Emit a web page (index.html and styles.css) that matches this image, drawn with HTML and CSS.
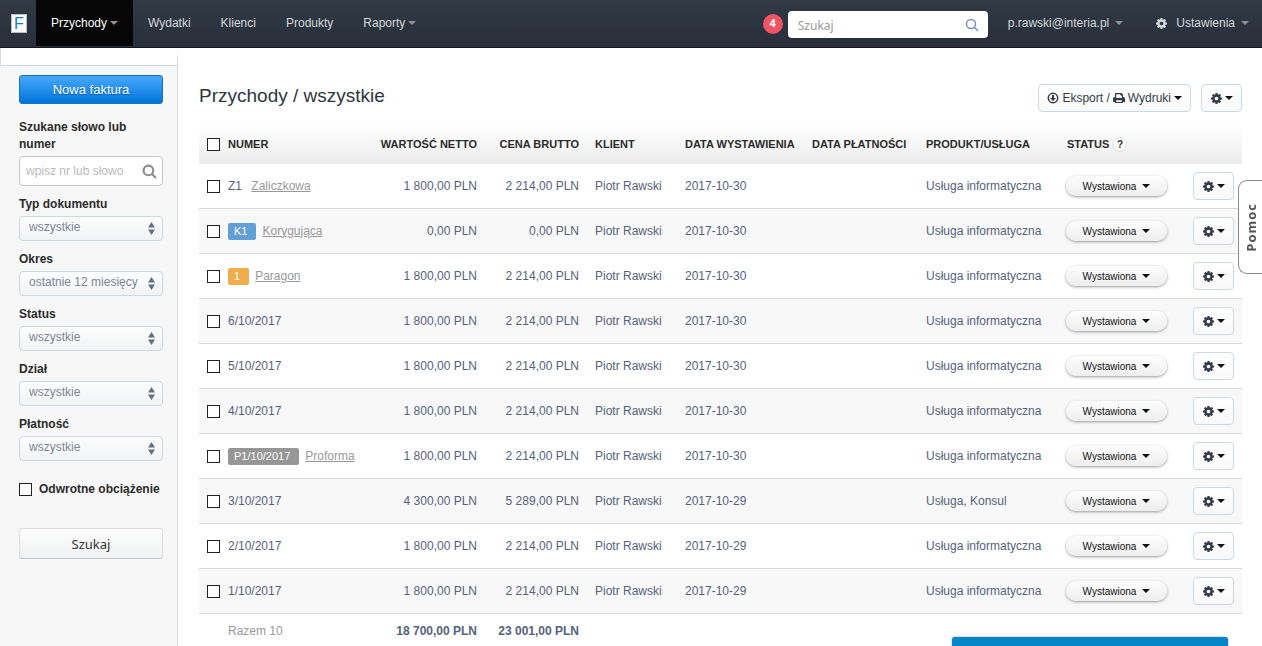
FILE: index.html
```html
<!DOCTYPE html>
<html lang="pl">
<head>
    <meta charset="UTF-8">
    <meta name="viewport" content="width=device-width, initial-scale=1.0">
    <title>Przychody / wszystkie</title>
    <link rel="stylesheet" href="styles.css">
</head>
<body>
    <svg class="symbols" aria-hidden="true">
        <symbol id="gear" viewBox="0 0 1536 1536">
            <path fill-rule="evenodd" d="M1024 768q0-106-75-181t-181-75-181 75-75 181 75 181 181 75 181-75 75-181zm512-109v222q0 12-8 23t-20 13l-185 28q-19 54-39 91 35 50 107 138 10 12 10 25t-9 23q-27 37-99 108t-94 71q-12 0-26-9l-138-108q-44 23-91 38-16 136-29 186-7 28-36 28h-222q-14 0-24.500-8.500t-11.500-21.500l-28-184q-49-16-90-37l-141 107q-10 9-25 9-14 0-25-11-126-114-165-168-7-10-7-23 0-12 8-23 15-21 51-66.500t54-70.500q-27-50-41-99l-183-27q-13-2-21-12.500t-8-23.500v-222q0-12 8-23t19-13l186-28q14-46 39-92-40-57-107-138-10-12-10-24 0-10 9-23 26-36 98.500-107.500t94.500-71.500q13 0 26 10l138 107q44-23 91-38 16-136 29-186 7-28 36-28h222q14 0 24.500 8.500t11.500 21.500l28 184q49 16 90 37l142-107q9-9 24-9 13 0 25 10 129 119 165 170 7 8 7 22 0 12-8 23-15 21-51 66.500t-54 70.500q26 50 41 98l183 28q13 2 21 12.500t8 23.500z"/>
        </symbol>
        <symbol id="caret" viewBox="0 0 8 4"><path d="M0 0h8L4 4z"/></symbol>
        <symbol id="lens" viewBox="0 0 14 14">
            <circle cx="6" cy="6" r="4.500" fill="none" stroke="currentColor"/>
            <path d="M9.300 9.300L13 13" fill="none" stroke="currentColor"/>
        </symbol>
        <symbol id="updown" viewBox="0 0 7 13"><path d="M3.500 0L7 5.500H0zM3.500 13L0 7.500h7z"/></symbol>
        <symbol id="download" viewBox="0 0 12 12">
            <circle cx="6" cy="6" r="4.700" fill="none" stroke="currentColor" stroke-width="1.500"/>
            <path d="M5 3h2v3h2L6 9 3 6h2z"/>
        </symbol>
        <symbol id="print" viewBox="0 0 12 12">
            <path fill-rule="evenodd" d="M2 1h6.500L10 2.500V5h.500Q12 5 12 6.500V10h-2v1H2v-1H0V6.500Q0 5 1.500 5H2zM3.200 2.200V6h5.600V3.600H7.400V2.200zM3.200 8.200v1.700h5.600V8.200z"/>
        </symbol>
    </svg>

    <header class="topbar">
        <a href="#" class="logo">F</a>
        <nav class="nav">
            <a href="#" class="active">Przychody <svg class="caret"><use href="#caret"/></svg></a>
            <a href="#">Wydatki</a>
            <a href="#">Klienci</a>
            <a href="#">Produkty</a>
            <a href="#">Raporty <svg class="caret"><use href="#caret"/></svg></a>
        </nav>
        <span class="badge">4</span>
        <form class="top-search">
            <input type="text" placeholder="Szukaj" aria-label="Szukaj">
            <svg class="lens"><use href="#lens"/></svg>
        </form>
        <div class="nav user-nav">
            <a href="#">p.rawski@interia.pl <svg class="caret"><use href="#caret"/></svg></a>
            <a href="#"><svg class="gear"><use href="#gear"/></svg>Ustawienia <svg class="caret"><use href="#caret"/></svg></a>
        </div>
    </header>

    <div class="page">
        <aside class="sidebar">
            <div class="sidebar-top"></div>
            <form class="filters">
                <button type="button" class="btn-new">Nowa faktura</button>
                <label for="slowo">Szukane słowo lub numer</label>
                <div class="field word">
                    <input type="text" id="slowo" placeholder="wpisz nr lub słowo">
                    <svg class="lens"><use href="#lens"/></svg>
                </div>
                <label for="typ">Typ dokumentu</label>
                <div class="field">
                    <select id="typ"><option>wszystkie</option></select>
                    <svg class="updown"><use href="#updown"/></svg>
                </div>
                <label for="okres">Okres</label>
                <div class="field">
                    <select id="okres"><option>ostatnie 12 miesięcy</option></select>
                    <svg class="updown"><use href="#updown"/></svg>
                </div>
                <label for="status">Status</label>
                <div class="field">
                    <select id="status"><option>wszystkie</option></select>
                    <svg class="updown"><use href="#updown"/></svg>
                </div>
                <label for="dzial">Dział</label>
                <div class="field">
                    <select id="dzial"><option>wszystkie</option></select>
                    <svg class="updown"><use href="#updown"/></svg>
                </div>
                <label for="platnosc">Płatność</label>
                <div class="field">
                    <select id="platnosc"><option>wszystkie</option></select>
                    <svg class="updown"><use href="#updown"/></svg>
                </div>
                <label class="check-row"><input type="checkbox"> Odwrotne obciążenie</label>
                <button type="button" class="btn-search">Szukaj</button>
            </form>
        </aside>

        <main class="main">
            <div class="title-row">
                <h1>Przychody / wszystkie</h1>
                <button class="btn export"><svg class="icon"><use href="#download"/></svg><span>Eksport /</span><svg class="icon"><use href="#print"/></svg><span>Wydruki</span><svg class="caret"><use href="#caret"/></svg></button>
                <button class="btn" aria-label="Opcje"><svg class="gear"><use href="#gear"/></svg><svg class="caret"><use href="#caret"/></svg></button>
            </div>

            <table class="invoices">
                <colgroup>
                    <col class="c-check"><col><col class="c-net"><col class="c-gross"><col class="c-client">
                    <col class="c-issued"><col class="c-paid"><col class="c-product"><col class="c-status"><col class="c-menu">
                </colgroup>
                <thead>
                    <tr>
                        <th><input type="checkbox" aria-label="Zaznacz wszystkie"></th>
                        <th>NUMER</th>
                        <th class="num">WARTOŚĆ NETTO</th>
                        <th class="num">CENA BRUTTO</th>
                        <th>KLIENT</th>
                        <th>DATA WYSTAWIENIA</th>
                        <th>DATA PŁATNOŚCI</th>
                        <th>PRODUKT/USŁUGA</th>
                        <th>STATUS <span class="help">?</span></th>
                        <th></th>
                    </tr>
                </thead>
                <tbody>
                    <tr>
                        <td><input type="checkbox" aria-label="Z1"></td>
                        <td>Z1 <a href="#" class="kind">Zaliczkowa</a></td>
                        <td class="num">1 800,00 PLN</td>
                        <td class="num">2 214,00 PLN</td>
                        <td>Piotr Rawski</td>
                        <td>2017-10-30</td>
                        <td></td>
                        <td>Usługa informatyczna</td>
                        <td class="st"><button class="status">Wystawiona <svg class="caret"><use href="#caret"/></svg></button></td>
                        <td><button class="btn" aria-label="Opcje"><svg class="gear"><use href="#gear"/></svg><svg class="caret"><use href="#caret"/></svg></button></td>
                    </tr>
                    <tr>
                        <td><input type="checkbox" aria-label="K1"></td>
                        <td><span class="tag blue">K1</span><a href="#" class="kind">Korygująca</a></td>
                        <td class="num">0,00 PLN</td>
                        <td class="num">0,00 PLN</td>
                        <td>Piotr Rawski</td>
                        <td>2017-10-30</td>
                        <td></td>
                        <td>Usługa informatyczna</td>
                        <td class="st"><button class="status">Wystawiona <svg class="caret"><use href="#caret"/></svg></button></td>
                        <td><button class="btn" aria-label="Opcje"><svg class="gear"><use href="#gear"/></svg><svg class="caret"><use href="#caret"/></svg></button></td>
                    </tr>
                    <tr>
                        <td><input type="checkbox" aria-label="1"></td>
                        <td><span class="tag orange">1</span><a href="#" class="kind">Paragon</a></td>
                        <td class="num">1 800,00 PLN</td>
                        <td class="num">2 214,00 PLN</td>
                        <td>Piotr Rawski</td>
                        <td>2017-10-30</td>
                        <td></td>
                        <td>Usługa informatyczna</td>
                        <td class="st"><button class="status">Wystawiona <svg class="caret"><use href="#caret"/></svg></button></td>
                        <td><button class="btn" aria-label="Opcje"><svg class="gear"><use href="#gear"/></svg><svg class="caret"><use href="#caret"/></svg></button></td>
                    </tr>
                    <tr>
                        <td><input type="checkbox" aria-label="6/10/2017"></td>
                        <td>6/10/2017</td>
                        <td class="num">1 800,00 PLN</td>
                        <td class="num">2 214,00 PLN</td>
                        <td>Piotr Rawski</td>
                        <td>2017-10-30</td>
                        <td></td>
                        <td>Usługa informatyczna</td>
                        <td class="st"><button class="status">Wystawiona <svg class="caret"><use href="#caret"/></svg></button></td>
                        <td><button class="btn" aria-label="Opcje"><svg class="gear"><use href="#gear"/></svg><svg class="caret"><use href="#caret"/></svg></button></td>
                    </tr>
                    <tr>
                        <td><input type="checkbox" aria-label="5/10/2017"></td>
                        <td>5/10/2017</td>
                        <td class="num">1 800,00 PLN</td>
                        <td class="num">2 214,00 PLN</td>
                        <td>Piotr Rawski</td>
                        <td>2017-10-30</td>
                        <td></td>
                        <td>Usługa informatyczna</td>
                        <td class="st"><button class="status">Wystawiona <svg class="caret"><use href="#caret"/></svg></button></td>
                        <td><button class="btn" aria-label="Opcje"><svg class="gear"><use href="#gear"/></svg><svg class="caret"><use href="#caret"/></svg></button></td>
                    </tr>
                    <tr>
                        <td><input type="checkbox" aria-label="4/10/2017"></td>
                        <td>4/10/2017</td>
                        <td class="num">1 800,00 PLN</td>
                        <td class="num">2 214,00 PLN</td>
                        <td>Piotr Rawski</td>
                        <td>2017-10-30</td>
                        <td></td>
                        <td>Usługa informatyczna</td>
                        <td class="st"><button class="status">Wystawiona <svg class="caret"><use href="#caret"/></svg></button></td>
                        <td><button class="btn" aria-label="Opcje"><svg class="gear"><use href="#gear"/></svg><svg class="caret"><use href="#caret"/></svg></button></td>
                    </tr>
                    <tr>
                        <td><input type="checkbox" aria-label="P1/10/2017"></td>
                        <td><span class="tag gray">P1/10/2017</span><a href="#" class="kind">Proforma</a></td>
                        <td class="num">1 800,00 PLN</td>
                        <td class="num">2 214,00 PLN</td>
                        <td>Piotr Rawski</td>
                        <td>2017-10-30</td>
                        <td></td>
                        <td>Usługa informatyczna</td>
                        <td class="st"><button class="status">Wystawiona <svg class="caret"><use href="#caret"/></svg></button></td>
                        <td><button class="btn" aria-label="Opcje"><svg class="gear"><use href="#gear"/></svg><svg class="caret"><use href="#caret"/></svg></button></td>
                    </tr>
                    <tr>
                        <td><input type="checkbox" aria-label="3/10/2017"></td>
                        <td>3/10/2017</td>
                        <td class="num">4 300,00 PLN</td>
                        <td class="num">5 289,00 PLN</td>
                        <td>Piotr Rawski</td>
                        <td>2017-10-29</td>
                        <td></td>
                        <td>Usługa, Konsul</td>
                        <td class="st"><button class="status">Wystawiona <svg class="caret"><use href="#caret"/></svg></button></td>
                        <td><button class="btn" aria-label="Opcje"><svg class="gear"><use href="#gear"/></svg><svg class="caret"><use href="#caret"/></svg></button></td>
                    </tr>
                    <tr>
                        <td><input type="checkbox" aria-label="2/10/2017"></td>
                        <td>2/10/2017</td>
                        <td class="num">1 800,00 PLN</td>
                        <td class="num">2 214,00 PLN</td>
                        <td>Piotr Rawski</td>
                        <td>2017-10-29</td>
                        <td></td>
                        <td>Usługa informatyczna</td>
                        <td class="st"><button class="status">Wystawiona <svg class="caret"><use href="#caret"/></svg></button></td>
                        <td><button class="btn" aria-label="Opcje"><svg class="gear"><use href="#gear"/></svg><svg class="caret"><use href="#caret"/></svg></button></td>
                    </tr>
                    <tr>
                        <td><input type="checkbox" aria-label="1/10/2017"></td>
                        <td>1/10/2017</td>
                        <td class="num">1 800,00 PLN</td>
                        <td class="num">2 214,00 PLN</td>
                        <td>Piotr Rawski</td>
                        <td>2017-10-29</td>
                        <td></td>
                        <td>Usługa informatyczna</td>
                        <td class="st"><button class="status">Wystawiona <svg class="caret"><use href="#caret"/></svg></button></td>
                        <td><button class="btn" aria-label="Opcje"><svg class="gear"><use href="#gear"/></svg><svg class="caret"><use href="#caret"/></svg></button></td>
                    </tr>
                </tbody>
                <tfoot>
                    <tr>
                        <td></td>
                        <td class="total-label">Razem 10</td>
                        <td class="num">18 700,00 PLN</td>
                        <td class="num">23 001,00 PLN</td>
                        <td colspan="6"></td>
                    </tr>
                </tfoot>
            </table>
        </main>
    </div>

    <button class="help-tab">Pomoc</button>
    <div class="chat-bar"></div>
</body>
</html>
```
FILE: styles.css
```css
* {
    box-sizing: border-box;
}
body {
    margin: 0;
    background: #fff;
    color: #55627c;
    font-family: "Liberation Sans", Arial, sans-serif;
    font-size: 12px;
    line-height: 17px;
}
button, input, select {
    font-family: inherit;
    font-size: 12px;
    margin: 0;
}
svg {
    fill: currentColor;
    flex: none;
}
.symbols {
    position: absolute;
    width: 0;
    height: 0;
}
.caret {
    width: 8px;
    height: 4px;
}
.gear {
    width: 11px;
    height: 11px;
}
.icon {
    width: 12px;
    height: 12px;
}

/* top bar */
.topbar {
    display: flex;
    align-items: center;
    height: 48px;
    background: linear-gradient(#303944, #282f3a);
    border-bottom: 1px solid #12161d;
}
.logo {
    width: 16px;
    height: 19px;
    margin: 0 9px 0 11px;
    border: 1px solid #b9bec4;
    background: #fff;
    color: #1b7bc0;
    font-size: 16px;
    line-height: 17px;
    text-align: center;
    text-decoration: none;
}
.nav {
    display: flex;
    align-self: stretch;
}
.nav a {
    display: flex;
    align-items: center;
    gap: 3px;
    height: 46px;
    padding: 0 15px;
    color: #d5d8dc;
    text-decoration: none;
}
.nav .caret {
    color: #8b9198;
}
.nav a.active {
    background: #060606;
    color: #fff;
}
.badge {
    width: 20px;
    height: 20px;
    margin-left: auto;
    border-radius: 50%;
    background: #ef5364;
    color: #fff;
    font-family: "Open Sans", sans-serif;
    font-size: 11px;
    font-weight: bold;
    line-height: 18px;
    text-align: center;
}
.top-search {
    position: relative;
    width: 200px;
    margin: 2px 5px 0;
}
.top-search input {
    display: block;
    width: 100%;
    height: 27px;
    padding: 2px 30px 0 10px;
    border: 0;
    border-radius: 4px;
    background: #fff;
    font-family: "Noto Sans", sans-serif;
}
.top-search input::placeholder {
    color: #9b9b9b;
}
.top-search .lens {
    position: absolute;
    top: 7px;
    right: 9px;
    width: 14px;
    height: 14px;
    color: #7d93b5;
    stroke-width: 1.5px;
}
.user-nav a {
    gap: 5px;
}
.user-nav a:last-child {
    padding: 0 13px 0 18px;
}
.user-nav .gear {
    margin-right: 4px;
}
.user-nav .caret {
    margin-left: 1px;
}

/* layout */
.page {
    display: flex;
    min-height: calc(100vh - 48px);
}
.sidebar {
    flex: none;
    width: 178px;
    padding-right: 1px;
    background: linear-gradient(#d3dce4, #d3dce4) right top 8px / 1px 100% no-repeat #f7f7f7;
}
.sidebar-top {
    height: 18px;
    background: #fff;
    border-left: 1px solid #d3dce4;
    border-bottom: 1px solid #d3dce4;
}
.filters {
    display: flex;
    flex-direction: column;
    padding: 9px 14px 0 19px;
    color: #2b2b2b;
}
.filters label {
    margin-bottom: 3px;
    font-weight: bold;
}
.btn-new {
    height: 29px;
    margin-bottom: 15px;
    border: 1px solid #1672c0;
    border-radius: 3px;
    background: linear-gradient(#48a9fb, #0074dc);
    color: #fff;
    font-size: 13px;
    text-shadow: 0 1px 1px #0a5aa5;
}
.field {
    position: relative;
    margin-bottom: 10px;
}
.field input,
.field select {
    display: block;
    width: 100%;
    border: 1px solid #ccd9e4;
    border-radius: 4px;
}
.field input {
    height: 30px;
    padding: 0 28px 0 6px;
    border-color: #c6c6c6;
    background: #fff;
}
.field input::placeholder {
    color: #bbb;
}
.field select {
    height: 25px;
    padding: 0 16px 4px 9px;
    background: linear-gradient(#fdfdfd, #f1f3f4);
    color: #7d8597;
    appearance: none;
}
.field .lens {
    position: absolute;
    top: 8px;
    right: 6px;
    width: 15px;
    height: 15px;
    color: #8d8d8d;
    stroke-width: 2px;
}
.updown {
    position: absolute;
    top: 6px;
    right: 8px;
    width: 7px;
    height: 13px;
    color: #66707f;
}
input[type="checkbox"] {
    appearance: none;
    display: block;
    flex: none;
    width: 13px;
    height: 13px;
    border: 1px solid #222;
    background: #fff;
}
.filters .check-row {
    display: flex;
    align-items: center;
    gap: 7px;
    margin: 10px 0 30px;
    white-space: nowrap;
}
.btn-search {
    height: 31px;
    border: 1px solid #ddd;
    border-bottom-color: #c4c4c4;
    border-radius: 3px;
    background: linear-gradient(#fdfdfd, #f0f1f2);
    color: #333;
    font-family: "Noto Sans", sans-serif;
    font-size: 13px;
}

/* content */
.main {
    flex: 1;
    min-width: 0;
    padding: 36px 20px 0 21px;
}
.title-row {
    display: flex;
    gap: 10px;
    margin-bottom: 12px;
}
h1 {
    margin: 0 auto 0 0;
    color: #2f3640;
    font-size: 19px;
    font-weight: normal;
    line-height: 24px;
}
.btn {
    display: flex;
    align-items: center;
    justify-content: center;
    gap: 3px;
    width: 41px;
    height: 28px;
    padding: 0;
    border: 1px solid #ccd8e6;
    border-radius: 4px;
    background: linear-gradient(#fff, #f9f9f9);
    color: #333b48;
}
.btn .caret {
    color: #111;
}
.btn.export {
    width: auto;
    padding: 0 8px;
}
.invoices {
    width: 100%;
    table-layout: fixed;
    border-collapse: separate;
    border-spacing: 0;
    white-space: nowrap;
}
.c-check { width: 21px; }
.c-net { width: 114px; }
.c-gross { width: 102px; }
.c-client { width: 90px; }
.c-issued { width: 127px; }
.c-paid { width: 114px; }
.c-product { width: 141px; }
.c-status { width: 126px; }
.c-menu { width: 57px; }
.invoices thead {
    background: linear-gradient(#fff, #ececec);
}
.invoices th {
    height: 40px;
    padding: 0 8px;
    color: #2b2b2b;
    font-size: 11px;
    text-align: left;
}
.invoices td {
    height: 45px;
    padding: 0 8px;
    border-bottom: 1px solid #d8d8d8;
}
.invoices tr > :first-child {
    padding-right: 0;
}
.invoices .num {
    text-align: right;
}
.invoices tbody tr:nth-child(even) {
    background: #f8f8f8;
}
.invoices tfoot td {
    height: 34px;
    border: 0;
    font-weight: bold;
}
.invoices tfoot .total-label {
    color: #999;
    font-weight: normal;
}
.invoices td.st {
    padding-left: 7px;
}
.help {
    display: inline-block;
    width: 15px;
    height: 15px;
    border: 1px solid #ddd;
    border-radius: 50%;
    background: #fff;
    font-size: 10px;
    line-height: 14px;
    text-align: center;
}
.kind {
    margin-left: 6px;
    color: #999;
    text-decoration: underline;
}
.tag {
    display: inline-block;
    padding: 0 9px 0 6px;
    border-radius: 2px;
    color: #fff;
    font-size: 11px;
}
.blue { background: #629fd6; }
.orange { background: #f0ad4e; }
.gray { background: #969696; }
.status {
    display: flex;
    align-items: center;
    justify-content: center;
    gap: 6px;
    width: 101px;
    height: 20px;
    padding: 0;
    border: 0;
    border-radius: 10px;
    background: linear-gradient(#fdfdfd, #eee);
    box-shadow: 0 1px 3px #999;
    color: #111;
    font-size: 10px;
}

/* overlays */
.help-tab {
    position: fixed;
    top: 180px;
    right: 0;
    width: 24px;
    height: 94px;
    padding: 0;
    border: 1px solid #888;
    border-right: 0;
    border-radius: 9px 0 0 9px;
    background: #fff;
    color: #555;
    font-family: "Open Sans", sans-serif;
    font-size: 13px;
    font-weight: bold;
    letter-spacing: 1px;
    writing-mode: sideways-lr;
}
.chat-bar {
    position: fixed;
    right: 34px;
    bottom: 0;
    width: 276px;
    height: 9px;
    border-radius: 3px 3px 0 0;
    background: #0486c8;
    box-shadow: 0 0 2px #888;
}
```
